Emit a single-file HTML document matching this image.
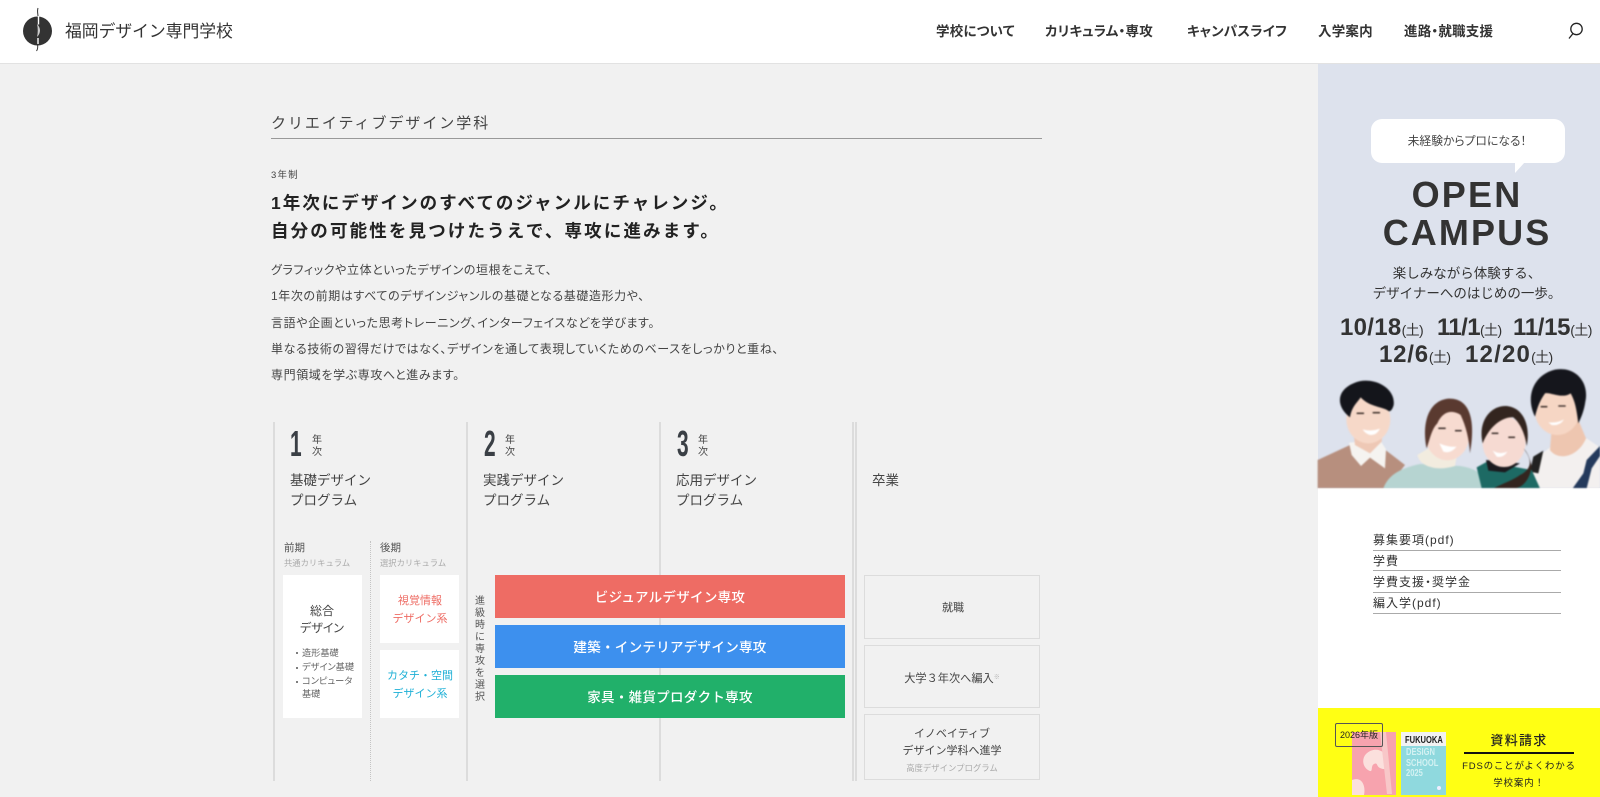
<!DOCTYPE html>
<html lang="ja"><head><meta charset="utf-8"><title>クリエイティブデザイン学科</title>
<style>
*{margin:0;padding:0;box-sizing:border-box}
html,body{width:1600px;height:797px;overflow:hidden;background:#f1f1f1}
body{position:relative;font-family:"Liberation Sans","Noto Sans CJK JP",sans-serif;color:#333}
.a{position:absolute}
.t{position:absolute;white-space:nowrap;line-height:20px;height:20px;font-feature-settings:"palt"}
.c{transform:translateX(-50%);text-align:center}
.v{position:absolute;width:2px;background:#dcdcdc;top:422px;height:359px}
.num{position:absolute;top:423px;font-size:36px;font-weight:700;line-height:42px;color:#3a3f45;transform:scaleX(.58);transform-origin:left top;font-family:"Liberation Sans",sans-serif}
.nen{position:absolute;top:435px;font-size:10px;line-height:11.5px;width:12px;text-align:center;color:#444}
.prog{position:absolute;top:471px;font-size:13.5px;line-height:20px;color:#444;white-space:nowrap}
.wb{position:absolute;background:#fff}
.bar{position:absolute;left:495px;width:350px;color:#fff;font-size:13.5px;text-align:center;letter-spacing:.3px;font-weight:500}
.gb{position:absolute;left:864px;width:176px;border:1px solid #dcdcdc}
.nav{font-size:13.5px;font-weight:700;top:22px;color:#333;letter-spacing:.2px}
.p{font-size:12px;color:#444;letter-spacing:.6px;left:271px}
.rl{left:1373px;width:188px;border-bottom:1px solid #aaa;position:absolute;height:21px;font-size:12px;line-height:20px;letter-spacing:1px;color:#333;white-space:nowrap;font-feature-settings:"palt"}
.date{font-weight:700;font-size:24px;color:#333;height:24px!important;line-height:24px!important;font-feature-settings:normal}
.date small{font-weight:400;font-size:14px;letter-spacing:-.6px}
</style></head><body>

<!-- header -->
<div class="a" style="left:0;top:0;width:1600px;height:64px;background:#fff;border-bottom:1px solid #e2e2e2"></div>
<svg class="a" style="left:20px;top:5px" width="36" height="50" viewBox="0 0 36 50">
<circle cx="17.500" cy="26" r="14.500" fill="#333"/>
<path d="M17 19c4 4 4 9 0 13 1-4 1-9 0-13z" fill="#ccc"/>
<path d="M18.500 11.500v8M18 33v6" stroke="#fff" stroke-width="1.400"/>
<path d="M18 3c-1 3-.2 5 0 8M17.500 39c.5 3 .5 5-1 7" fill="none" stroke="#333" stroke-width="1"/>
</svg>
<div class="t" style="left:65px;top:22px;font-size:16.800px;font-feature-settings:normal;color:#333">福岡デザイン専門学校</div>
<div class="t nav" style="left:936px">学校について</div>
<div class="t nav" style="left:1045px">カリキュラム・専攻</div>
<div class="t nav" style="left:1187px">キャンパスライフ</div>
<div class="t nav" style="left:1318px">入学案内</div>
<div class="t nav" style="left:1404px">進路・就職支援</div>
<svg class="a" style="left:1566px;top:21px" width="18" height="20" viewBox="0 0 18 20"><circle cx="10.500" cy="8" r="5.700" fill="none" stroke="#222" stroke-width="1.300"/><path d="M7 12.500L3 17.500" stroke="#222" stroke-width="1.300"/></svg>

<!-- main intro -->
<div class="t" style="left:271px;top:114px;font-size:15px;letter-spacing:1.950px;font-feature-settings:normal;color:#444">クリエイティブデザイン学科</div>
<div class="a" style="left:271px;top:138px;width:771px;height:1px;background:#999"></div>
<div class="t" style="left:271px;top:166px;font-size:9.500px;letter-spacing:1.200px;color:#444">3年制</div>
<div class="t" style="left:271px;top:193px;font-size:17.500px;font-weight:700;letter-spacing:2.050px;font-feature-settings:normal;color:#222">1年次にデザインのすべてのジャンルにチャレンジ。</div>
<div class="t" style="left:271px;top:221px;font-size:17.500px;font-weight:700;letter-spacing:2.150px;font-feature-settings:normal;color:#222">自分の可能性を見つけたうえで、専攻に進みます。</div>
<div class="t p" style="top:260px">グラフィックや立体といったデザインの垣根をこえて、</div>
<div class="t p" style="top:286px">1年次の前期はすべてのデザインジャンルの基礎となる基礎造形力や、</div>
<div class="t p" style="top:313px">言語や企画といった思考トレーニング、インターフェイスなどを学びます。</div>
<div class="t p" style="top:339px">単なる技術の習得だけではなく、デザインを通して表現していくためのベースをしっかりと重ね、</div>
<div class="t p" style="top:365px">専門領域を学ぶ専攻へと進みます。</div>

<!-- diagram -->
<div class="v" style="left:273px"></div>
<div class="v" style="left:466px"></div>
<div class="v" style="left:659px"></div>
<div class="v" style="left:852px"></div>
<div class="v" style="left:855px"></div>
<div class="a" style="left:370px;top:541px;height:240px;border-left:1px dotted #c4c4c4"></div>

<div class="num" style="left:290px">1</div><div class="nen" style="left:311px">年<br>次</div>
<div class="prog" style="left:290px">基礎デザイン<br>プログラム</div>
<div class="num" style="left:484px">2</div><div class="nen" style="left:504px">年<br>次</div>
<div class="prog" style="left:483px">実践デザイン<br>プログラム</div>
<div class="num" style="left:677px">3</div><div class="nen" style="left:697px">年<br>次</div>
<div class="prog" style="left:676px">応用デザイン<br>プログラム</div>
<div class="prog" style="left:872px">卒業</div>

<div class="t" style="left:284px;top:538px;font-size:10.500px;color:#555">前期</div>
<div class="t" style="left:284px;top:553px;font-size:8.300px;color:#aaa;font-feature-settings:normal">共通カリキュラム</div>
<div class="t" style="left:380px;top:538px;font-size:10.500px;color:#555">後期</div>
<div class="t" style="left:380px;top:553px;font-size:8.300px;color:#aaa;font-feature-settings:normal">選択カリキュラム</div>

<div class="wb" style="left:283px;top:575px;width:79px;height:143px"></div>
<div class="t c" style="left:322px;top:601px;font-size:12px;color:#444">総合</div>
<div class="t c" style="left:322px;top:618px;font-size:12px;color:#444">デザイン</div>
<div class="a" style="left:296px;top:652px;width:2px;height:2px;border-radius:50%;background:#555"></div>
<div class="a" style="left:296px;top:667px;width:2px;height:2px;border-radius:50%;background:#555"></div>
<div class="a" style="left:296px;top:681px;width:2px;height:2px;border-radius:50%;background:#555"></div>
<div class="t" style="left:302px;top:643px;font-size:9.200px;color:#666">造形基礎</div>
<div class="t" style="left:302px;top:657px;font-size:9.200px;color:#666">デザイン基礎</div>
<div class="t" style="left:302px;top:671px;font-size:9.200px;color:#666">コンピュータ</div>
<div class="t" style="left:302px;top:684px;font-size:9.200px;color:#666">基礎</div>

<div class="wb" style="left:380px;top:575px;width:79px;height:68px"></div>
<div class="t c" style="left:420px;top:591px;font-size:11px;color:#ee6c64">視覚情報</div>
<div class="t c" style="left:420px;top:609px;font-size:11px;color:#ee6c64;font-feature-settings:normal">デザイン系</div>
<div class="wb" style="left:380px;top:650px;width:79px;height:68px"></div>
<div class="t c" style="left:420px;top:666px;font-size:11px;color:#1fb0d6;font-feature-settings:normal">カタチ・空間</div>
<div class="t c" style="left:420px;top:684px;font-size:11px;color:#1fb0d6;font-feature-settings:normal">デザイン系</div>

<div class="a" style="left:474px;top:596px;width:12px;font-size:10px;line-height:12px;text-align:center;color:#555">進<br>級<br>時<br>に<br>専<br>攻<br>を<br>選<br>択</div>

<div class="bar" style="top:575px;height:43px;line-height:45px;background:#ee6c64">ビジュアルデザイン専攻</div>
<div class="bar" style="top:625px;height:43px;line-height:45px;background:#3d90ee">建築・インテリアデザイン専攻</div>
<div class="bar" style="top:675px;height:43px;line-height:45px;background:#21b06a">家具・雑貨プロダクト専攻</div>

<div class="gb" style="top:575px;height:64px"></div>
<div class="t c" style="left:953px;top:598px;font-size:11px;color:#444">就職</div>
<div class="gb" style="top:645px;height:63px"></div>
<div class="t c" style="left:952px;top:668px;font-size:11.200px;color:#444;font-feature-settings:normal">大学３年次へ編入<span style="font-size:6px;color:#aaa;vertical-align:3px">※</span></div>
<div class="gb" style="top:714px;height:66px"></div>
<div class="t c" style="left:952px;top:724px;font-size:11px;color:#444;font-feature-settings:normal">イノベイティブ</div>
<div class="t c" style="left:952px;top:741px;font-size:11px;color:#444;font-feature-settings:normal">デザイン学科へ進学</div>
<div class="t c" style="left:952px;top:758px;font-size:8.400px;color:#aaa;font-feature-settings:normal">高度デザインプログラム</div>

<!-- sidebar -->
<div class="a" style="left:1318px;top:64px;width:282px;height:424px;background:#dde2ed"></div>
<div class="a" style="left:1318px;top:488px;width:282px;height:220px;background:#fff"></div>
<div class="a" style="left:1318px;top:708px;width:282px;height:89px;background:#ffff14"></div>

<div class="a" style="left:1371px;top:119px;width:194px;height:44px;background:#fff;border-radius:11px"></div>
<svg class="a" style="left:1514px;top:162px" width="12" height="12"><path d="M1 0H11L1 11z" fill="#fff"/></svg>
<div class="t c" style="left:1467px;top:131px;font-size:11.800px;color:#444">未経験からプロになる！</div>
<div class="t c" style="left:1467px;top:175px;height:40px;line-height:40px;font-size:36px;font-weight:700;letter-spacing:2.200px;color:#333;font-feature-settings:normal">OPEN</div>
<div class="t c" style="left:1467px;top:213px;height:40px;line-height:40px;font-size:36px;font-weight:700;letter-spacing:2.100px;color:#333;font-feature-settings:normal">CAMPUS</div>
<div class="t c" style="left:1467px;top:264px;font-size:13.500px;font-feature-settings:normal;color:#333">楽しみながら体験する、</div>
<div class="t c" style="left:1467px;top:284px;font-size:13.500px;font-feature-settings:normal;color:#333">デザイナーへのはじめの一歩。</div>
<div class="t date" style="left:1340px;top:316px;letter-spacing:.3px">10/18<small>(土)</small></div>
<div class="t date" style="left:1437px;top:316px;letter-spacing:-.6px">11/1<small>(土)</small></div>
<div class="t date" style="left:1513px;top:316px;letter-spacing:-.3px">11/15<small>(土)</small></div>
<div class="t date" style="left:1379px;top:343px;letter-spacing:.8px">12/6<small>(土)</small></div>
<div class="t date" style="left:1465px;top:343px;letter-spacing:1.200px">12/20<small>(土)</small></div>

<!-- people -->
<svg class="a" style="left:1300px;top:360px;filter:blur(.7px)" width="300" height="128" viewBox="0 0 900 384">
<!-- person 4 -->
<path d="M690 385L700 300 760 255 860 235 900 262V385z" fill="#f3f0ef"/>
<path d="M690 335L700 290 730 272 715 340z" fill="#222"/>
<path d="M818 385L850 340 860 300 900 258V288L875 325 860 385z" fill="#243a5c"/>
<path d="M755 205L750 270C775 305 835 290 858 235L835 180z" fill="#eec6b0"/>
<ellipse cx="772" cy="150" rx="68" ry="75" fill="#f6d6c4"/>
<path d="M705 170C675 110 700 45 765 29 830 18 868 70 856 125 852 155 842 175 835 190 830 150 826 125 812 100 785 118 750 95 735 100 722 118 712 140 705 170z" fill="#15161c"/>
<!-- person 1 -->
<path d="M53 300L150 255 250 265 315 315 260 385H53z" fill="#b78f7e"/>
<path d="M147 248L155 285 183 318 210 293 255 325 258 268 240 240z" fill="#f5f3f0"/>
<path d="M160 215L165 255 210 280 245 245 248 205z" fill="#eec8b5"/>
<ellipse cx="205" cy="178" rx="66" ry="72" fill="#f6d8c8"/>
<path d="M150 172C108 140 108 92 160 70 215 45 288 82 281 135 278 148 270 158 264 152 250 140 210 142 182 112 170 130 155 140 150 172z" fill="#14151b"/>
<path d="M188 208Q214 216 240 206 230 226 212 225 196 222 188 208z" fill="#fff"/>
<!-- person 2 -->
<path d="M250 385C265 345 300 325 360 312L480 318C530 325 555 345 562 385z" fill="#b6d4d1"/>
<path d="M352 285C360 320 410 335 465 318L470 290 385 265z" fill="#f2ecdf"/>
<ellipse cx="442" cy="225" rx="66" ry="76" fill="#f7dbd0"/>
<path d="M380 265C365 190 385 122 445 116 510 113 528 180 510 280 507 235 498 200 482 165 460 150 430 150 412 190 396 205 390 235 380 265z" fill="#5a3a30"/>
<path d="M418 250Q445 262 470 260 452 282 430 275z" fill="#fff"/>
<!-- person 3 -->
<path d="M530 322L570 300 640 320 695 330 720 385H545z" fill="#1d6a64"/>
<path d="M558 300L565 332 615 337 660 310z" fill="#1c1a1e"/>
<ellipse cx="612" cy="245" rx="65" ry="76" fill="#f6dad2"/>
<path d="M548 250C532 180 575 135 620 138 672 143 692 200 680 258 676 225 662 190 640 172 610 170 570 195 548 250z" fill="#33251f"/>
<path d="M670 265C695 295 700 325 660 345 640 360 610 370 580 385H640C670 385 690 355 695 320 690 295 682 275 670 265z" fill="#33251f"/>
<path d="M578 272Q600 285 622 275 610 295 590 290z" fill="#fff"/>
<!-- eyes -->
<path d="M170 160h22M218 158h22M415 205h22M465 212h20M575 220h20M625 232h20M722 140h20M775 138h22" stroke="#2a1e1a" stroke-width="4" fill="none"/>
<path d="M745 187Q770 190 792 178 780 198 755 195z" fill="#fff"/>
</svg>

<!-- links -->
<div class="rl" style="top:530px">募集要項(pdf)</div>
<div class="rl" style="top:551px;height:20px">学費</div>
<div class="rl" style="top:572px">学費支援・奨学金</div>
<div class="rl" style="top:593px">編入学(pdf)</div>

<!-- yellow banner -->
<div class="a" style="left:1352px;top:732px;width:44px;height:63px;background:#f7a3ae;overflow:hidden">
<svg width="44" height="63"><path d="M14 22c8-8 20-4 22 6s-4 10-8 8-2-6-6-4 0 10-6 6-6-12-2-16zM0 48c10-4 14 6 12 15H0z" fill="#fbe0dd"/><path d="M28 0h6l6 62h-5z" fill="#f8c7c8"/></svg>
</div>
<div class="a" style="left:1335px;top:723px;width:48px;height:24px;border:1px solid #555;border-radius:2px;font-size:9px;line-height:22px;text-align:center;color:#222;font-feature-settings:normal;white-space:nowrap">2026年版</div>
<div class="a" style="left:1401px;top:732px;width:45px;height:63px;background:#8fd9de"></div>
<div class="a" style="left:1401px;top:732px;width:45px;height:14px;background:#f2f2f2"></div>
<div class="a" style="left:1405px;top:733px;font-size:10.500px;font-weight:700;line-height:14px;color:#222;transform:scaleX(.72);transform-origin:left top;white-space:nowrap">FUKUOKA</div>
<div class="a" style="left:1406px;top:747px;font-size:10.500px;line-height:10.500px;color:#d3f1f2;font-weight:700;transform:scaleX(.72);transform-origin:left top;white-space:nowrap">DESIGN<br>SCHOOL<br>2025</div>
<div class="a" style="left:1437px;top:786px;width:4px;height:4px;border-radius:50%;background:#eef"></div>
<div class="t c" style="left:1519px;top:731px;font-size:13px;letter-spacing:1.300px;font-weight:500;color:#222;font-feature-settings:normal">資料請求</div>
<div class="a" style="left:1464px;top:752px;width:110px;height:1.500px;background:#111"></div>
<div class="t c" style="left:1519px;top:757px;font-size:9.500px;letter-spacing:.8px;color:#222;font-feature-settings:normal">FDSのことがよくわかる</div>
<div class="t c" style="left:1519px;top:774px;font-size:9.500px;letter-spacing:.8px;color:#222;font-feature-settings:normal">学校案内！</div>
</body></html>
